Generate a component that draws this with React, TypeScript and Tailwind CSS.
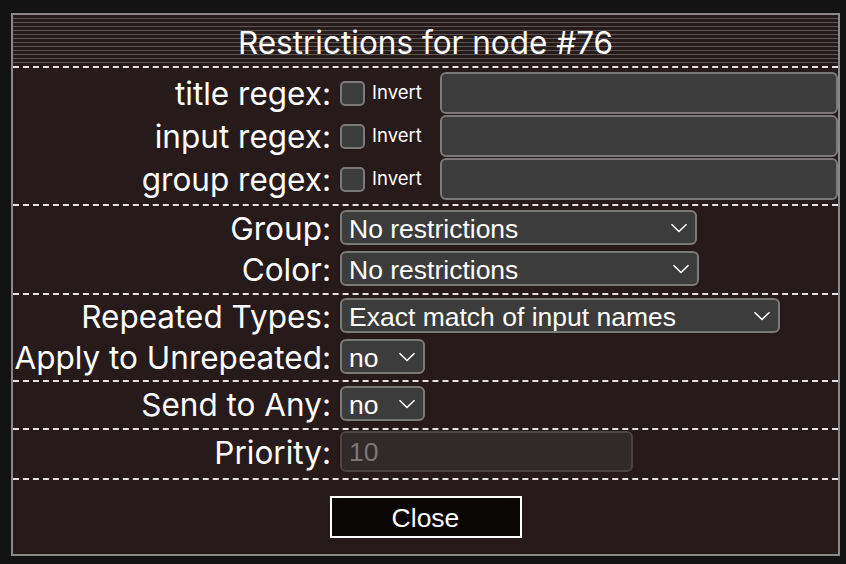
import React from 'react'

const sans = "font-['Inter','Noto_Sans',sans-serif]"
const arial = "font-['Liberation_Sans','Arial',sans-serif]"

function Chevron() {
  return (
    <svg width="18" height="10" viewBox="0 0 18 10" className="shrink-0">
      <path d="M1.5 1.2 L9 8.5 L16.5 1.2" fill="none" stroke="white" strokeWidth="1.6" />
    </svg>
  )
}

function Select({ value, width }: { value: string; width: string }) {
  return (
    <div
      className={`${width} flex h-[35px] items-center justify-between rounded-[6px] border-2 border-[#7a7a7a] bg-[#3c3c3c] pl-[7px] pr-[7px] text-[26.5px] text-white ${arial}`}
    >
      <span className="pt-[3px] leading-none">{value}</span>
      <Chevron />
    </div>
  )
}

function Label({ children }: { children: React.ReactNode }) {
  return (
    <div className={`w-[318px] shrink-0 whitespace-nowrap pt-[2px] text-right text-[31.5px] leading-none text-white ${sans}`}>
      {children}
    </div>
  )
}

function RegexRow({ label }: { label: string }) {
  return (
    <div className="flex h-[42px] items-center">
      <Label>{label}</Label>
      <div className="ml-[9px] h-[25px] w-[25px] shrink-0 rounded-[5px] border-2 border-[#7a7a7a] bg-[#3c3c3c]" />
      <span className={`ml-[7px] w-[68px] text-[18.5px] text-white ${sans}`}>Invert</span>
      <div className="h-[42px] flex-1 rounded-[6px] border-2 border-[#7a7a7a] bg-[#3c3c3c]" />
    </div>
  )
}

function Dash() {
  return <div className="border-t-2 border-dashed border-[#e6e0e0]" />
}

export default function App() {
  return (
    <div className="min-h-[564px] w-[846px] bg-[#121212] pl-[11px] pt-[13px]">
      <div className="flex h-[543px] w-[829px] flex-col border-2 border-[#888888] bg-[#261a1a]">
        <div className="flex h-[51px] items-center justify-center bg-[repeating-linear-gradient(to_bottom,#261a1a_0px,#261a1a_3px,#5a5555_3px,#5a5555_4px)]">
          <h1 className={`pt-[4px] text-[31.5px] leading-none text-white ${sans}`}>Restrictions for node #76</h1>
        </div>
        <Dash />
        <div className="flex flex-col gap-[1px] pb-[4px] pt-[4px]">
          <RegexRow label="title regex:" />
          <RegexRow label="input regex:" />
          <RegexRow label="group regex:" />
        </div>
        <Dash />
        <div className="flex flex-col gap-[6px] pb-[7px] pt-[4px]">
          <div className="flex items-center gap-[9px]">
            <Label>Group:</Label>
            <Select value="No restrictions" width="w-[357px]" />
          </div>
          <div className="flex items-center gap-[9px]">
            <Label>Color:</Label>
            <Select value="No restrictions" width="w-[359px]" />
          </div>
        </div>
        <Dash />
        <div className="flex flex-col gap-[6px] pb-[6px] pt-[3px]">
          <div className="flex items-center gap-[9px]">
            <Label>Repeated Types:</Label>
            <Select value="Exact match of input names" width="w-[440px]" />
          </div>
          <div className="flex items-center gap-[9px]">
            <Label>Apply to Unrepeated:</Label>
            <Select value="no" width="w-[85px]" />
          </div>
        </div>
        <Dash />
        <div className="flex flex-col pb-[7px] pt-[4px]">
          <div className="flex items-center gap-[9px]">
            <Label>Send to Any:</Label>
            <Select value="no" width="w-[85px]" />
          </div>
        </div>
        <Dash />
        <div className="flex flex-col pb-[6px] pt-[1px]">
          <div className="flex items-center gap-[9px]">
            <Label>Priority:</Label>
            <div
              className={`flex h-[41px] w-[293px] items-center rounded-[6px] border-2 border-[#4a4444] bg-[#302a2a] pl-[7px] pt-[2px] text-[26.5px] text-[#7a7676] ${arial}`}
            >
              10
            </div>
          </div>
        </div>
        <Dash />
        <div className="flex flex-1 items-start justify-center pt-[16px]">
          <button
            className={`flex h-[42px] w-[192px] items-center justify-center border-2 border-white bg-[#0a0606] pt-[3px] text-[26.5px] text-white ${arial}`}
          >
            Close
          </button>
        </div>
      </div>
    </div>
  )
}
